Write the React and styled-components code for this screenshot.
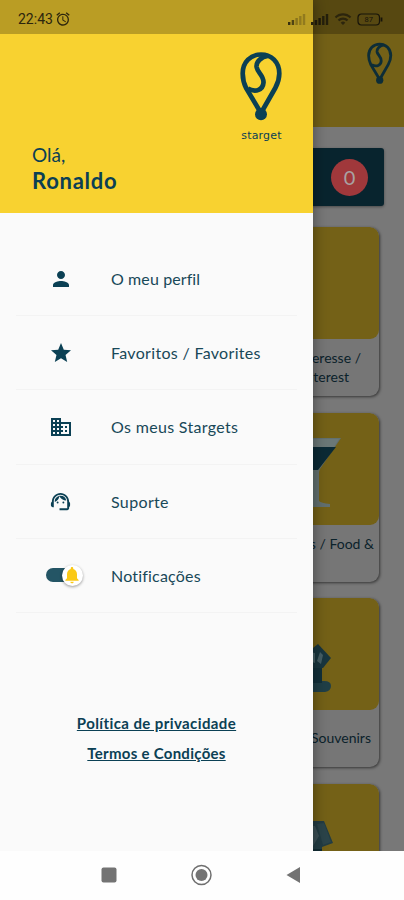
import React from "react";
import styled, { createGlobalStyle } from "styled-components";
import {
  MdAlarm,
  MdDomain,
  MdNotifications,
  MdPerson,
  MdStar,
  MdSupportAgent,
  MdWifi
} from "react-icons/md";

const navy = "#0b4054";
const yellow = "#f8d230";
const dimYellow = "#746117";

const menuItems = [
  { label: "O meu perfil", icon: <MdPerson size={24} />, spacing: 0.1 },
  { label: "Favoritos / Favorites", icon: <MdStar size={24} />, spacing: 0.32 },
  { label: "Os meus Stargets", icon: <MdDomain size={24} />, spacing: 0.32 },
  { label: "Suporte", icon: <MdSupportAgent size={23} />, spacing: 0.35 }
];

const Logo = ({ width, color }) => (
  <svg
    width={width}
    height={(width * 70) / 43}
    viewBox="0 0 43 70"
    fill="none"
    stroke={color}
    strokeWidth="4.7"
  >
    <path d="M21 62 6.3 37.5C3.600 32 2.700 28 2.700 22.500 2.700 11 10.700 3.500 21 3.500s18.300 7.500 18.300 19c0 6-1.500 10-4 14.500L21 62" />
    <path d="M28.500 4.800C20.500 6 16 11 16.600 16c.8 5.500 7.300 8.500 6.900 15.500C23 38.500 16 42 7.800 37.500" />
    <circle cx="21" cy="63.2" r="6" fill={color} stroke="none" />
  </svg>
);

const Signal = ({ strong }) => (
  <svg width="18" height="12" viewBox="0 0 18 12" fill="#17140a">
    <rect x="0" y="9" width="2.4" height="3" opacity={strong ? 0.9 : 0.8} />
    <rect x="3.7" y="7" width="2.4" height="5" opacity={strong ? 0.9 : 0.65} />
    <rect x="7.4" y="5" width="2.4" height="7" opacity={strong ? 0.9 : 0.3} />
    <rect x="11.1" y="3" width="2.4" height="9" opacity={strong ? 0.8 : 0.25} />
    <rect x="14.8" y="1" width="2.4" height="11" opacity={strong ? 0.8 : 0.25} />
  </svg>
);

const Battery = () => (
  <svg width="26" height="13" viewBox="0 0 26 13" fill="none" stroke="#17140a">
    <rect x="1" y="1" width="21.5" height="11" rx="3.5" strokeWidth="1.2" />
    <path d="M24.5 4.500v4" strokeWidth="1.8" />
    <text
      x="11.7"
      y="9.3"
      fontSize="7.5"
      fontFamily="Roboto, sans-serif"
      textAnchor="middle"
      fill="#17140a"
      stroke="none"
    >
      87
    </text>
  </svg>
);

const Cocktail = () => (
  <svg width="168" height="112" viewBox="0 0 168 112">
    <path d="M77 25h53l-21 31-1 3v29q2 2 11 3v3H90v-3l10-3V58z" fill="#62706f" />
    <path d="M84 34h41l-18 23h-6z" fill="#0b2a35" />
    <path d="M78 26h50l-5 8H82z" fill="#6b7877" />
  </svg>
);

const Souvenir = () => (
  <svg width="168" height="112" viewBox="0 0 168 112">
    <path d="M90 83h23q7 0 7 5t-6 6H90z" fill="#203f47" />
    <path d="M98 65h13v20H98z" fill="#12303a" />
    <path d="m107 46 13 14-8 10H96l-4-12z" fill="#19363f" />
    <path d="m109 54 3 3-2 9-4-3zM98 54l6 1v10l-6-2z" fill="#465f65" />
  </svg>
);

const Gem = () => (
  <svg width="168" height="112" viewBox="0 0 168 112">
    <path d="M88 37h25l9 22-11 4v12H88z" fill="#223c43" />
    <path d="M96 42h8l4 10-6 10h-8z" fill="#3b5056" />
    <path d="m106 40 7-1 7 19-8 3z" fill="#2b444a" />
    <path d="M98 65h13v10H98z" fill="#122b32" />
  </svg>
);

const cards = [
  { lines: [{ text: "Interesse /", end: 18 }, { text: "Interest", end: 30 }] },
  { lines: [{ text: "Bares / Food &", end: 5 }], art: <Cocktail /> },
  { lines: [{ text: "Souvenirs", end: 8 }], art: <Souvenir />, low: true },
  { lines: [], art: <Gem /> }
];

const App = () => {
  return (
    <>
      <GlobalStyle />
      <Screen>
        <Home>
          <HomeHeader>
            <Logo width={26} color="#0d2d37" />
          </HomeHeader>
          <Counter>
            <Badge>0</Badge>
          </Counter>
          <CardList>
            {cards.map((card, index) => (
              <Card key={index}>
                <CardArt>{card.art}</CardArt>
                <CardText $low={card.low}>
                  {card.lines.map(line => (
                    <CardLine key={line.text} $end={line.end}>
                      {line.text}
                    </CardLine>
                  ))}
                </CardText>
              </Card>
            ))}
          </CardList>
        </Home>

        <Drawer>
          <DrawerHeader>
            <Greeting>
              <Hello>Olá,</Hello>
              <UserName>Ronaldo</UserName>
            </Greeting>
            <Brand>
              <Logo width={43} color={navy} />
              <BrandName>starget</BrandName>
            </Brand>
          </DrawerHeader>
          <Menu>
            {menuItems.map(item => (
              <MenuItem key={item.label}>
                <IconSlot>{item.icon}</IconSlot>
                <Label $spacing={item.spacing}>{item.label}</Label>
              </MenuItem>
            ))}
            <MenuItem>
              <IconSlot>
                <Toggle>
                  <Knob>
                    <MdNotifications size={20} />
                  </Knob>
                </Toggle>
              </IconSlot>
              <Label $spacing={0.2}>Notificações</Label>
            </MenuItem>
          </Menu>
          <Links>
            <Link $spacing={0.4}>Política de privacidade</Link>
            <Link $spacing={0.28}>Termos e Condições</Link>
          </Links>
        </Drawer>

        <StatusBar>
          <Clock>22:43</Clock>
          <MdAlarm size={16} />
          <StatusIcons>
            <Signal />
            <Signal strong />
            <MdWifi size={18} />
            <Battery />
          </StatusIcons>
        </StatusBar>

        <NavBar>
          <svg width="16" height="16" viewBox="0 0 16 16">
            <rect x="0.5" y="0.5" width="15" height="15" rx="2" fill="#737373" />
          </svg>
          <svg width="22" height="22" viewBox="0 0 22 22">
            <circle cx="10.5" cy="11" r="9.5" fill="none" stroke="#6f6f6f" strokeWidth="1.5" />
            <circle cx="10.5" cy="11" r="6" fill="#737373" />
          </svg>
          <svg width="16" height="18" viewBox="0 0 16 18">
            <path d="M14 1v16L.5 9z" fill="#737373" />
          </svg>
        </NavBar>
      </Screen>
    </>
  );
};

export default App;

const GlobalStyle = createGlobalStyle`
  * {
    box-sizing: border-box;
  }

  body {
    margin: 0;
    font-family: Lato, "Liberation Sans", sans-serif;
    color: ${navy};
  }

  svg {
    display: block;
    flex-shrink: 0;
  }
`;

const Screen = styled.div`
  position: relative;
  display: flex;
  flex-direction: column;
  width: 404px;
  height: 900px;
  overflow: hidden;
`;

const Home = styled.main`
  height: 851px;
  overflow: hidden;
  background: #787878;
`;

const HomeHeader = styled.header`
  display: flex;
  justify-content: flex-end;
  height: 127px;
  padding: 42px 11px 0 0;
  background: ${dimYellow};
`;

const Counter = styled.div`
  display: flex;
  align-items: center;
  justify-content: flex-end;
  height: 58px;
  margin: 21px 20px 0;
  padding-right: 16px;
  border-radius: 3px;
  background: #08242e;
  box-shadow: 0 1px 3px rgba(0, 0, 0, 0.4);
`;

const Badge = styled.span`
  width: 37px;
  height: 37px;
  border-radius: 50%;
  background: #a0383b;
  color: #a9a2a2;
  font-size: 20px;
  line-height: 37px;
  text-align: center;
`;

const CardList = styled.div`
  display: flex;
  flex-direction: column;
  align-items: flex-end;
  gap: 16.5px;
  padding: 21px 25px 0 0;
`;

const Card = styled.article`
  flex-shrink: 0;
  width: 168px;
  height: 169px;
  overflow: hidden;
  border-radius: 9px;
  background: #767676;
  box-shadow: 1px 1px 3px rgba(0, 0, 0, 0.55);
`;

const CardArt = styled.div`
  height: 112px;
  border-radius: 9px;
  background: ${dimYellow};
`;

const CardText = styled.div`
  padding-top: ${props => (props.$low ? 18 : 9)}px;
  color: #0b222b;
  font-size: 14px;
  line-height: 19px;
  text-align: right;
  white-space: nowrap;
`;

const CardLine = styled.div`
  padding-right: ${props => props.$end}px;
`;

const Drawer = styled.aside`
  position: absolute;
  top: 0;
  left: 0;
  width: 313px;
  height: 851px;
  background: #fafafa;
  box-shadow: 0 0 14px rgba(0, 0, 0, 0.4);
`;

const DrawerHeader = styled.header`
  display: flex;
  justify-content: space-between;
  height: 213px;
  padding: 51px 30px 0 32px;
  background: ${yellow};
`;

const Greeting = styled.div`
  padding-top: 91px;
`;

const Hello = styled.div`
  font-size: 19px;
  line-height: 26px;
`;

const UserName = styled.div`
  font-size: 22px;
  font-weight: 700;
  line-height: 26px;
  letter-spacing: 0.75px;
`;

const Brand = styled.div`
  display: flex;
  flex-direction: column;
  align-items: center;
`;

const BrandName = styled.div`
  margin-top: 7px;
  font-family: "DejaVu Sans", sans-serif;
  font-size: 11px;
  line-height: 16px;
  letter-spacing: 0.2px;
`;

const Menu = styled.nav`
  display: flex;
  flex-direction: column;
  padding: 29px 16px 0;
`;

const MenuItem = styled.div`
  display: flex;
  align-items: center;
  height: 74.2px;
  border-bottom: 1px solid #f3f3f3;
`;

const IconSlot = styled.div`
  display: flex;
  justify-content: center;
  width: 89px;
  margin-right: 6px;
`;

const Label = styled.span`
  color: #184858;
  font-size: 16px;
  letter-spacing: ${props => props.$spacing}px;
  white-space: nowrap;
`;

const Toggle = styled.div`
  display: flex;
  align-items: center;
  justify-content: flex-end;
  width: 30px;
  height: 14px;
  border-radius: 7px;
  background: #245565;
`;

const Knob = styled.span`
  display: flex;
  align-items: center;
  justify-content: center;
  flex-shrink: 0;
  width: 21px;
  height: 21px;
  margin-right: -7px;
  border-radius: 50%;
  background: #fff;
  color: #fac916;
  box-shadow: 0 1px 3px rgba(0, 0, 0, 0.4);
`;

const Links = styled.div`
  display: flex;
  flex-direction: column;
  align-items: center;
  padding-top: 95px;
`;

const Link = styled.a`
  font-size: 15px;
  font-weight: 700;
  line-height: 30.5px;
  letter-spacing: ${props => props.$spacing}px;
  text-decoration: underline;
`;

const StatusBar = styled.div`
  position: absolute;
  top: 0;
  left: 0;
  display: flex;
  align-items: center;
  gap: 2px;
  width: 404px;
  height: 34px;
  padding: 4px 21px 0 18px;
  background: rgba(0, 0, 0, 0.25);
  color: #2c250d;
`;

const Clock = styled.span`
  font-family: Roboto, sans-serif;
  font-size: 14px;
`;

const StatusIcons = styled.div`
  display: flex;
  align-items: center;
  gap: 5px;
  margin-left: auto;
`;

const NavBar = styled.footer`
  position: relative;
  display: flex;
  align-items: center;
  justify-content: space-between;
  height: 49px;
  padding: 0 102px 2px 101px;
  background: #fefefe;
`;
